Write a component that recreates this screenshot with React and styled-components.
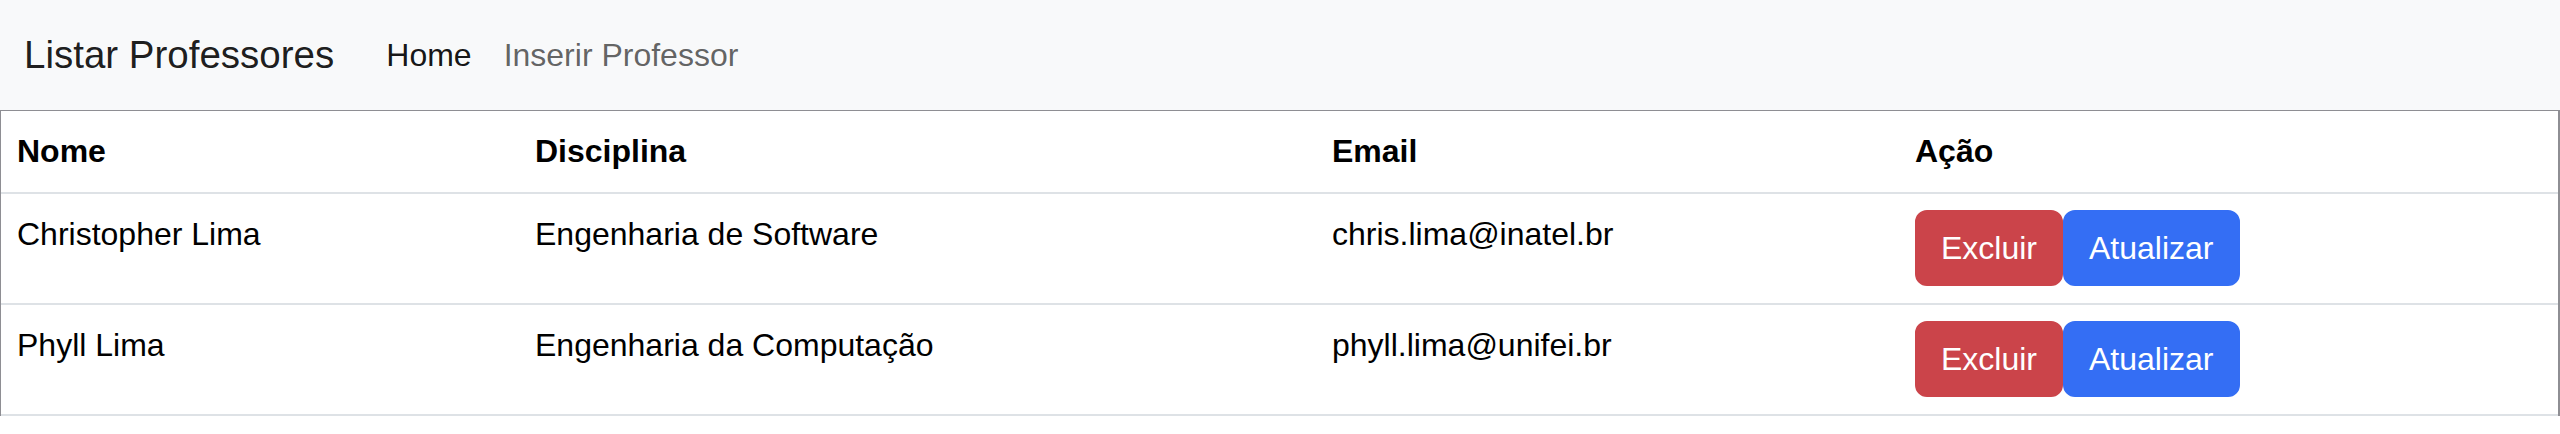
import { createGlobalStyle, styled } from 'styled-components';

const GlobalStyle = createGlobalStyle`
  html,
  body {
    margin: 0;
    padding: 0;
    background: #ffffff;
  }
  body {
    font-family: 'Liberation Sans', Arial, sans-serif;
    font-size: 32px;
    line-height: 1.5;
    color: #000;
  }
  * {
    box-sizing: border-box;
  }
`;

const professores = [
  { nome: 'Christopher Lima', disciplina: 'Engenharia de Software', email: 'chris.lima@inatel.br' },
  { nome: 'Phyll Lima', disciplina: 'Engenharia da Computação', email: 'phyll.lima@unifei.br' },
];

const App = () => {
  return (
    <>
      <GlobalStyle />
      <Navbar>
        <Brand href="#">Listar Professores</Brand>
        <NavList>
          <NavLink href="#" active>
            Home
          </NavLink>
          <NavLink href="#">Inserir Professor</NavLink>
        </NavList>
      </Navbar>
      <TableBox>
        <Table>
          <colgroup>
            <col style={{ width: 518 }} />
            <col style={{ width: 797 }} />
            <col style={{ width: 583 }} />
            <col />
          </colgroup>
          <thead>
            <tr>
              <Th>Nome</Th>
              <Th>Disciplina</Th>
              <Th>Email</Th>
              <Th>Ação</Th>
            </tr>
          </thead>
          <tbody>
            {professores.map((p) => (
              <tr key={p.email}>
                <Td>{p.nome}</Td>
                <Td>{p.disciplina}</Td>
                <Td>{p.email}</Td>
                <Td>
                  <Actions>
                    <Btn variant="danger">Excluir</Btn>
                    <Btn variant="primary">Atualizar</Btn>
                  </Actions>
                </Td>
              </tr>
            ))}
          </tbody>
        </Table>
      </TableBox>
    </>
  );
};

const Navbar = styled.nav`
  display: flex;
  align-items: center;
  height: 110px;
  padding: 0 24px;
  background-color: #f8f9fa;
`;

const Brand = styled.a`
  font-size: 38.5px;
  line-height: 58px;
  color: rgba(0, 0, 0, 0.9);
  text-decoration: none;
  margin-right: 36px;
  white-space: nowrap;
`;

const NavList = styled.div`
  display: flex;
  align-items: center;
`;

const NavLink = styled.a`
  font-size: 32px;
  line-height: 48px;
  padding: 0 16px;
  text-decoration: none;
  color: ${(props) => (props.active ? 'rgba(0, 0, 0, 0.92)' : 'rgba(0, 0, 0, 0.62)')};
`;

const TableBox = styled.div`
  border-top: 1px solid #8e8e93;
  border-left: 1px solid #8e8e93;
  border-right: 2px solid #8e8e93;
`;

const Table = styled.table`
  width: 100%;
  table-layout: fixed;
  border-collapse: collapse;
`;

const Th = styled.th`
  text-align: left;
  vertical-align: top;
  font-weight: 700;
  padding: 16px 16px 17px;
  border-bottom: 2px solid #dee2e6;
  color: #000;
`;

const Td = styled.td`
  vertical-align: top;
  padding: 16px 16px 17px;
  border-bottom: 2px solid #dee2e6;
  color: #000;
  white-space: nowrap;
`;

const Actions = styled.div`
  display: flex;
`;

const Btn = styled.button`
  font-family: inherit;
  font-size: 32px;
  line-height: 48px;
  padding: 12px 24px;
  border: 2px solid transparent;
  border-radius: 12px;
  color: #fff;
  cursor: pointer;
  background-color: ${(props) => (props.variant === 'danger' ? '#cb444a' : '#346ef4')};
  border-color: ${(props) => (props.variant === 'danger' ? '#cb444a' : '#346ef4')};
`;

export default App;
